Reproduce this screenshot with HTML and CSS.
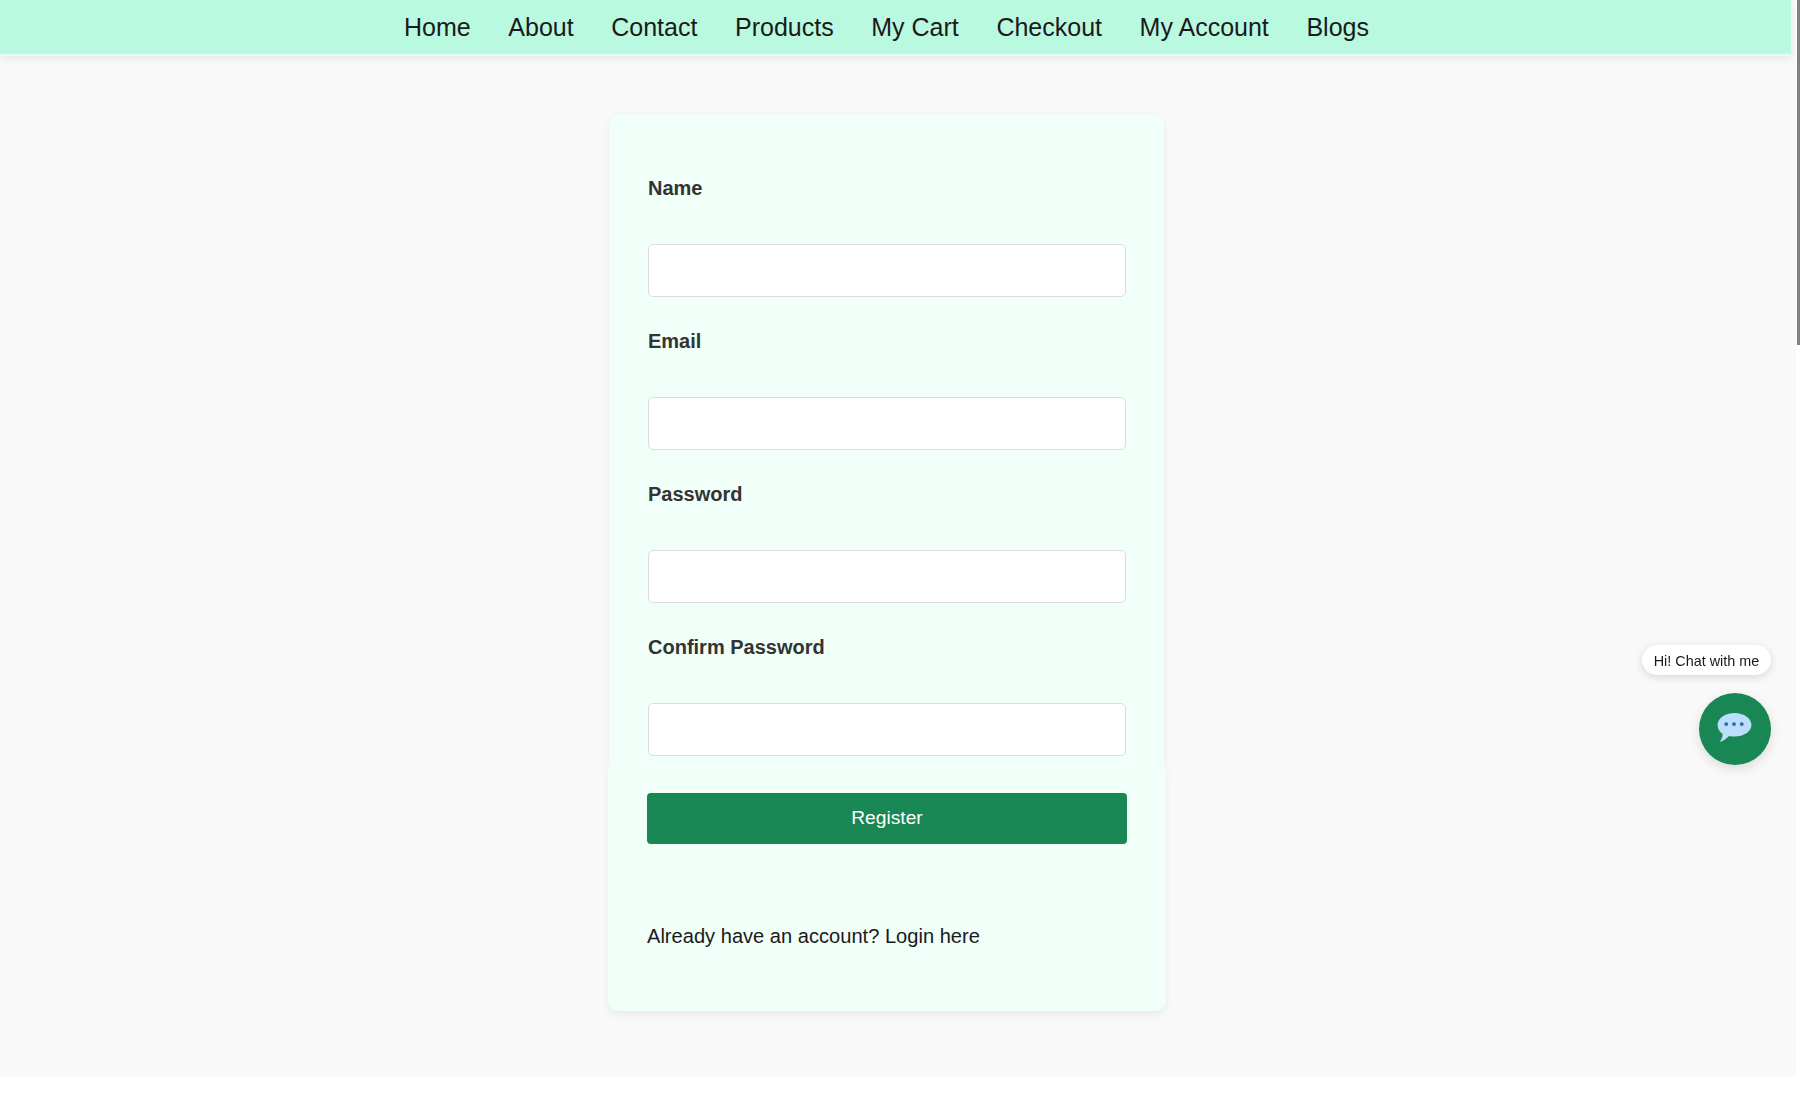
FILE: index.html
```html
<!DOCTYPE html>
<html lang="en">
<head>
<meta charset="utf-8">
<title>Register</title>
<link rel="stylesheet" href="styles.css">
</head>
<body>
<div class="page">
  <nav class="nav">
    <a href="#">Home</a>
    <a href="#">About</a>
    <a href="#">Contact</a>
    <a href="#">Products</a>
    <a href="#">My Cart</a>
    <a href="#">Checkout</a>
    <a href="#">My Account</a>
    <a href="#">Blogs</a>
  </nav>
  <main class="main">
    <div class="card">
      <form class="card-fields">
        <div class="field">
          <label for="name">Name</label>
          <input id="name" type="text">
        </div>
        <div class="field">
          <label for="email">Email</label>
          <input id="email" type="email">
        </div>
        <div class="field">
          <label for="password">Password</label>
          <input id="password" type="password">
        </div>
        <div class="field">
          <label for="confirm">Confirm Password</label>
          <input id="confirm" type="password">
        </div>
      </form>
      <div class="card-actions">
        <button class="register" type="button">Register</button>
        <p class="login">Already have an account? Login here</p>
      </div>
    </div>
  </main>
</div>
<div class="chat">
  <span class="chat-label">Hi! Chat with me</span>
  <span class="chat-button">
    <svg class="chat-icon" width="35" height="31" viewBox="0 0 36 32" aria-hidden="true">
      <path fill="#bbdefb" d="M18 1c9.600 0 17.500 5.400 17.500 12.200S27.600 25.400 18 25.400c-2 0-3.900-.2-5.700-.7C10.300 27.200 6.500 30 2.800 31c1.700-2.600 2.800-5.100 3-8.200C2.500 20.600.5 17.100.5 13.200.5 6.400 8.400 1 18 1z"/>
      <circle cx="9.500" cy="12.500" r="2" fill="#2a6aa8"/>
      <circle cx="17.500" cy="12.500" r="2" fill="#2a6aa8"/>
      <circle cx="25.500" cy="12.500" r="2" fill="#2a6aa8"/>
    </svg>
  </span>
</div>
<div class="scroll-thumb"></div>
</body>
</html>
```

FILE: styles.css
```css
* { box-sizing: border-box; }
html, body { margin: 0; height: 100%; overflow: hidden; background: #fff; }
body { font-family: "Liberation Sans", Arial, sans-serif; color: #1a1a1a; }

.page {
  width: 1796px;
  height: 1077px;
  background: #f9f9f9;
}

.nav {
  width: 1791px;
  height: 56px;
  background: #b9f9e0;
  border-bottom: 2px solid #e6fcf3;
  box-shadow: 0 2px 8px rgba(0, 0, 0, 0.09);
  display: flex;
  justify-content: center;
  align-items: center;
  gap: 37.6px;
  padding-right: 18px;
}
.nav a {
  font-size: 25px;
  color: #1a1a1a;
  text-decoration: none;
}

.main {
  width: 1773px;
  display: flex;
  justify-content: center;
  padding-top: 58px;
}

.card { width: 559px; display: flex; flex-direction: column; align-items: center; }

.card-fields {
  width: 555px;
  height: 653px;
  background: #f0fff8;
  border-radius: 10px 10px 0 0;
  box-shadow: 0 2px 8px rgba(0, 0, 0, 0.06);
  padding: 63px 38px 0 39px;
}

.field { display: flex; flex-direction: column; margin-bottom: 33px; }
.field label {
  font-size: 20px;
  line-height: 23px;
  font-weight: 700;
  color: #333;
  margin-bottom: 44px;
}
.field input {
  width: 100%;
  height: 53px;
  background: #fff;
  border: 1px solid #ddd;
  border-radius: 5px;
  outline: none;
}

.card-actions {
  align-self: flex-end;
  width: 558px;
  height: 244px;
  background: #f0fff8;
  border-radius: 0 0 10px 10px;
  box-shadow: 0 4px 8px rgba(0, 0, 0, 0.06);
  padding: 26px 39px 0;
}

.register {
  display: block;
  width: 480px;
  height: 51px;
  background: #198754;
  color: #fff;
  border: 0;
  border-radius: 4px;
  font-family: inherit;
  font-size: 19.2px;
  padding-bottom: 3px;
}

.login {
  margin: 81px 0 0;
  font-size: 20.1px;
  line-height: 23px;
  color: #1a1a1a;
}

.chat {
  position: fixed;
  right: 29px;
  top: 645px;
  display: flex;
  flex-direction: column;
  align-items: flex-end;
  gap: 18px;
}
.chat-label {
  width: 129px;
  height: 30px;
  display: flex;
  align-items: center;
  justify-content: center;
  padding-top: 1px;
  background: #fff;
  border-radius: 15px;
  font-size: 14.4px;
  color: #1a1a1a;
  box-shadow: 0 2px 8px rgba(0, 0, 0, 0.15);
}
.chat-button {
  width: 72px;
  height: 72px;
  border-radius: 50%;
  background: #198754;
  box-shadow: 0 4px 12px rgba(0, 0, 0, 0.12);
  display: flex;
  align-items: center;
  justify-content: center;
  padding: 0 2px 4px 0;
}

.scroll-thumb {
  position: fixed;
  top: 0;
  right: 0;
  width: 3px;
  height: 345px;
  background: #808080;
}
```
